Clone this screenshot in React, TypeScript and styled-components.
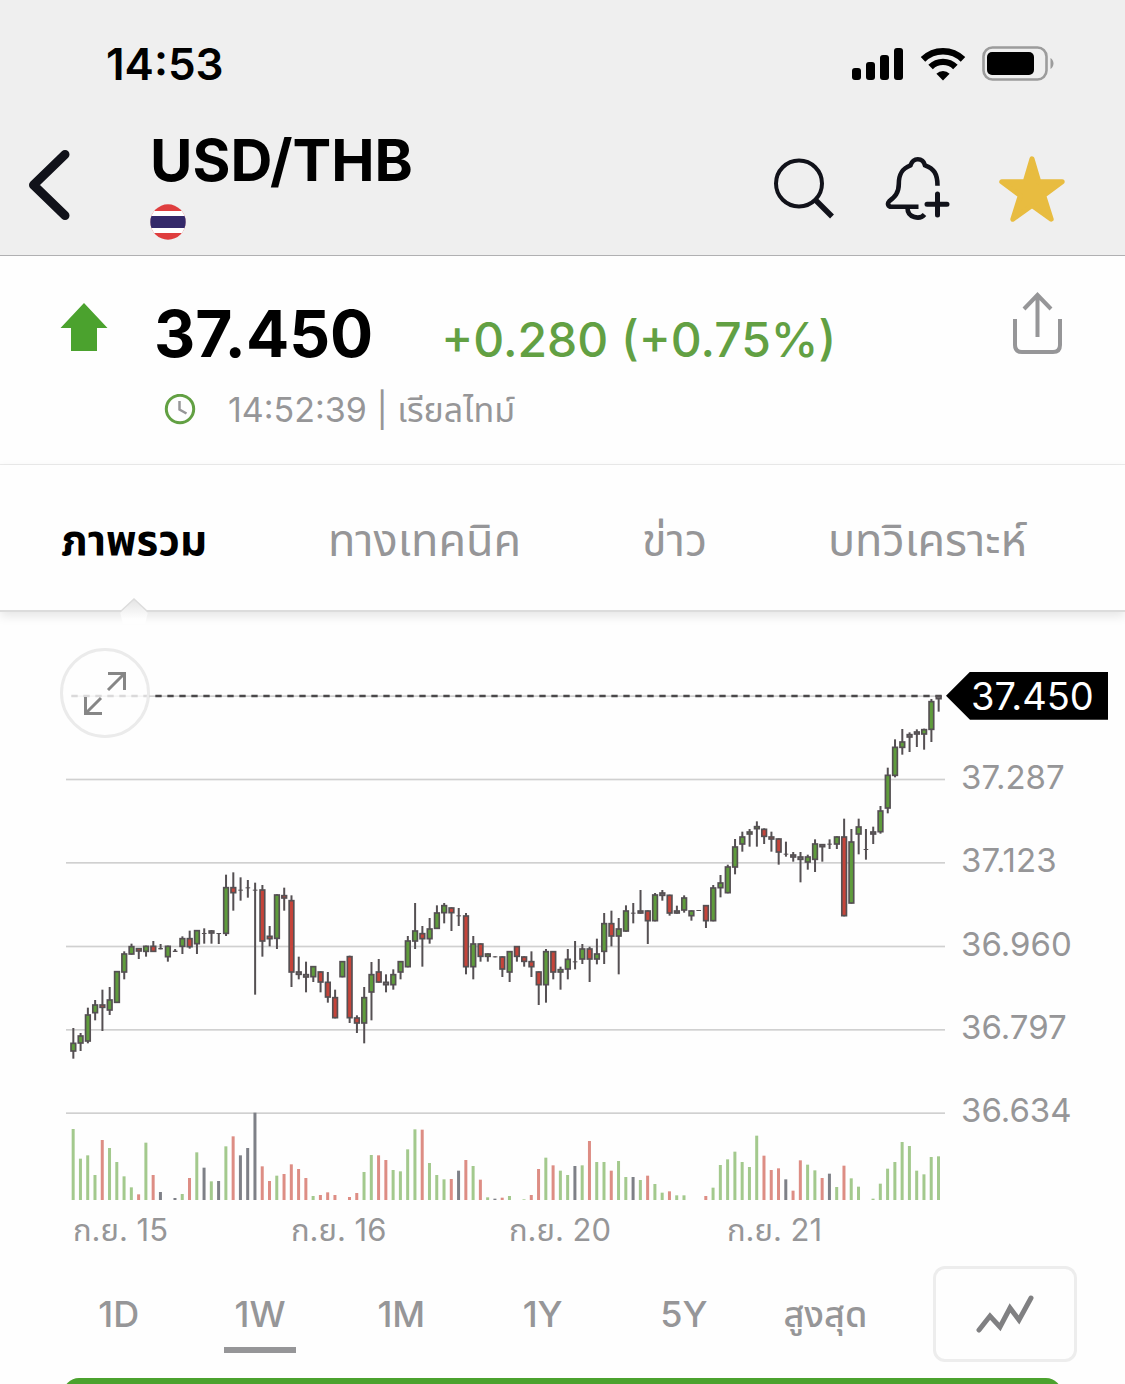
import React, { useState } from "react";
import styled, { createGlobalStyle } from "styled-components";

const GlobalStyle = createGlobalStyle`
  * { box-sizing: border-box; }
  body {
    margin: 0;
    background: #fefefe;
    font-family: Inter, "Noto Sans Thai", "Noto Sans", sans-serif;
    color: #000;
  }
  button {
    margin: 0;
    padding: 0;
    border: 0;
    background: none;
    color: inherit;
    font: inherit;
    cursor: pointer;
  }
  svg { display: block; }
`;

const Screen = styled.div`
  display: flex;
  flex-direction: column;
  height: 100vh;
  overflow: hidden;

  & > * { flex: none; }
`;

const Header = styled.header`
  background: #efefef;
  border-bottom: 1px solid #b0b0b2;
`;

const StatusBar = styled.div`
  display: flex;
  align-items: center;
  justify-content: space-between;
  height: 128px;
  padding: 0 70px 0 106px;
`;

const Clock = styled.time`
  font-size: 44px;
  font-weight: 600;
  line-height: 52px;
`;

const StatusIcons = styled.div`
  display: flex;
  align-items: center;
  gap: 16px;
`;

const NavBar = styled.div`
  display: flex;
  align-items: flex-start;
  height: 127px;
  padding: 0 60px 0 28px;
`;

const BackButton = styled.button`
  width: 44px;
  margin: 20px 78px 0 0;
`;

const TitleBlock = styled.div`
  flex: 1;
  display: flex;
  flex-direction: column;
  gap: 12px;
`;

const Title = styled.h1`
  margin: 0;
  font-size: 58px;
  font-weight: 700;
  line-height: 64px;
`;

const NavActions = styled.div`
  display: flex;
  gap: 48px;
  padding-top: 28px;
`;

const Quote = styled.section`
  display: flex;
  align-items: flex-start;
  height: 209px;
  padding: 36px 60px 0;
  border-bottom: 1px solid #ececec;
`;

const ArrowSlot = styled.div`
  width: 94px;
  padding-top: 10px;
`;

const QuoteBody = styled.div`
  flex: 1;
  display: flex;
  flex-direction: column;
  gap: 8px;
`;

const PriceLine = styled.div`
  display: flex;
  align-items: baseline;
  gap: 68px;
  line-height: 84px;
`;

const Price = styled.strong`
  font-size: 64px;
  font-weight: 700;
`;

const Change = styled.span`
  font-size: 48px;
  font-weight: 500;
  color: #62a043;
`;

const TimeLine = styled.div`
  display: flex;
  align-items: center;
  gap: 32px;
  padding-left: 10px;
  color: #969698;
  font-size: 34px;
  line-height: 40px;
`;

const Tabs = styled.nav`
  position: relative;
  z-index: 1;
  display: flex;
  justify-content: space-between;
  height: 147px;
  padding: 0 98px 0 61px;
  border-bottom: 2px solid #dcdcdc;
  box-shadow: 0 4px 10px rgba(0, 0, 0, 0.1);
  background: #fefefe;
`;

const Tab = styled.button<{ $active: boolean }>`
  position: relative;
  height: 147px;
  padding-top: 6px;
  font-size: ${(p) => (p.$active ? 42 : 45)}px;
  font-weight: ${(p) => (p.$active ? 700 : 400)};
  color: ${(p) => (p.$active ? "#000" : "#969698")};
  white-space: nowrap;
`;

const Caret = styled.svg`
  position: absolute;
  bottom: -12px;
  left: 50%;
  margin-left: -15px;
`;

const ChartSection = styled.section`
  position: relative;
  display: flex;
  height: 500px;
  margin-top: 42px;
  padding-left: 66px;
`;

const Plot = styled.div`
  flex: 1;
  padding-top: 16px;
`;

const PlotSvg = styled.svg`
  width: 100%;
  height: 530px;
`;

const Axis = styled.ol`
  display: flex;
  flex-direction: column;
  width: 180px;
  margin: 0;
  padding: 0;
  list-style: none;
`;

const AxisLabel = styled.li`
  flex: 1;
  display: flex;
  align-items: center;
  padding: 0 0 4px 16px;
  font-size: 33px;
  line-height: 40px;
  color: #969698;
`;

const CurrentLabel = styled.li`
  flex: 1;
  display: flex;
  align-items: center;
  padding-bottom: 4px;
`;

const PriceTag = styled.span`
  width: 162px;
  height: 48px;
  margin: 4px 0 0 1px;
  padding-left: 25px;
  clip-path: polygon(0 50%, 24px 0, 100% 0, 100% 100%, 24px 100%);
  background: #000;
  color: #fff;
  font-size: 38px;
  line-height: 48px;
`;

const ExpandButton = styled.button`
  position: absolute;
  top: -6px;
  left: 60px;
  display: grid;
  place-items: center;
  width: 90px;
  height: 90px;
  border: 3px solid #ebebeb;
  border-radius: 50%;
  background: rgba(254, 254, 254, 0.8);
`;

const Dates = styled.div`
  display: grid;
  grid-template-columns: repeat(4, 1fr);
  margin-top: 56px;
  padding: 0 180px 0 73px;
  font-size: 31px;
  line-height: 40px;
  color: #969698;
`;

const Controls = styled.div`
  display: flex;
  align-items: flex-start;
  margin-top: 16px;
  padding: 0 48px 0 48px;
`;

const Ranges = styled.div`
  flex: 1;
  display: grid;
  grid-template-columns: repeat(6, 1fr);
  margin-right: 37px;
`;

const Range = styled.button<{ $active: boolean }>`
  display: flex;
  flex-direction: column;
  align-items: center;
  height: 87px;
  padding-top: 24px;
  font-size: 36px;
  font-weight: 500;
  line-height: 48px;
  color: #969698;

  &::after {
    content: "";
    width: 72px;
    height: 6px;
    margin-top: 9px;
    background: ${(p) => (p.$active ? "#969698" : "transparent")};
  }
`;

const StyleButton = styled.button`
  display: grid;
  place-items: center;
  width: 144px;
  height: 96px;
  border: 3px solid #ededed;
  border-radius: 12px;
`;

const TradeButton = styled.button`
  height: 96px;
  margin: 16px 63px 0;
  border-radius: 16px;
  background: #4ba22e;
`;

type Kind = "g" | "r" | "n";
/* wick top, body top, body bottom, wick bottom, kind */
type Candle = [number, number, number, number, Kind];

const lower = (by: number, rows: Candle[]): Candle[] =>
  rows.map(([a, b, c, d, k]) => [a + by, b + by, c + by, d + by, k]);

const candles: Candle[] = [
  ...lower(570, [
    [504, 548, 575, 596, "g"], [519, 526, 551, 573, "g"], [443, 463, 545, 550, "g"],
    [420, 433, 460, 481, "g"], [389, 433, 444, 513, "r"], [381, 418, 452, 465, "g"],
    [333, 333, 429, 429, "g"], [274, 280, 338, 358, "g"], [251, 258, 284, 284, "g"],
    [264, 264, 275, 297, "r"], [257, 257, 276, 290, "g"], [243, 257, 276, 276, "r"],
    [252, 264, 268, 268, "n"], [257, 257, 292, 305, "g"], [267, 272, 276, 276, "n"],
    [229, 234, 261, 282, "g"], [212, 234, 262, 266, "r"], [210, 210, 253, 282, "g"],
    [205, 219, 222, 251, "n"], [210, 211, 221, 251, "n"], [219, 219, 222, 252, "n"],
    [44, 81, 222, 228, "g"], [37, 81, 100, 152, "r"], [52, 89, 92, 122, "n"],
    [60, 82, 85, 113, "n"], [68, 89, 92, 404, "n"], [75, 88, 245, 290, "r"],
    [198, 227, 238, 259, "r"], [103, 103, 237, 267, "g"], [83, 105, 116, 152, "r"],
    [106, 120, 338, 381, "r"], [290, 334, 345, 358, "n"], [305, 342, 353, 397, "n"],
    [318, 318, 352, 366, "g"], [334, 334, 368, 397, "r"], [336, 365, 413, 428, "r"],
    [389, 411, 475, 475, "r"], [303, 303, 352, 352, "g"], [287, 288, 475, 489, "r"],
    [466, 472, 491, 519, "r"], [381, 411, 491, 550, "g"], [306, 342, 398, 481, "g"],
    [297, 334, 368, 368, "r"], [343, 365, 376, 397, "n"], [328, 342, 376, 389, "g"],
    [303, 303, 338, 358, "g"], [228, 241, 322, 322, "g"], [129, 211, 245, 267, "g"],
    [198, 219, 238, 320, "r"], [174, 205, 238, 251, "g"], [136, 157, 207, 207, "g"],
    [129, 135, 160, 190, "g"], [142, 142, 160, 213, "r"], [144, 166, 169, 198, "n"],
    [159, 166, 322, 343, "r"], [228, 250, 322, 358, "g"], [250, 250, 291, 305, "r"],
    [280, 280, 291, 305, "g"], [289, 289, 292, 292, "n"], [289, 289, 329, 351, "r"],
    [273, 273, 338, 366, "g"], [258, 258, 291, 305, "r"], [289, 289, 306, 320, "r"],
    [274, 303, 322, 351, "r"], [334, 334, 376, 435, "r"], [267, 273, 376, 428, "g"],
    [273, 273, 338, 358, "r"], [320, 327, 338, 389, "g"], [267, 296, 329, 358, "g"],
    [243, 304, 307, 328, "n"], [252, 265, 299, 312, "g"], [260, 265, 299, 366, "r"],
    [236, 280, 299, 313, "g"], [159, 189, 276, 312, "g"], [152, 189, 230, 259, "r"],
    [174, 205, 230, 343, "g"], [136, 151, 215, 215, "g"], [129, 158, 161, 190, "n"],
    [90, 151, 161, 161, "n"], [151, 151, 184, 252, "r"], [99, 103, 184, 184, "g"],
    [90, 97, 108, 122, "n"], [104, 104, 161, 167, "r"], [137, 151, 161, 161, "n"],
  ]),
  ...lower(390, [
    [286, 292, 332, 338, "g"], [331, 331, 349, 362, "g"], [330, 330, 333, 333, "n"],
    [315, 315, 364, 384, "r"], [255, 262, 364, 364, "g"], [225, 247, 265, 292, "g"],
    [194, 199, 280, 280, "g"], [117, 139, 203, 223, "g"], [95, 109, 134, 155, "g"],
    [87, 94, 104, 140, "g"], [64, 78, 88, 140, "g"], [85, 86, 111, 132, "r"],
    [95, 109, 119, 155, "r"], [115, 115, 158, 194, "r"], [125, 161, 164, 170, "n"],
    [156, 163, 173, 185, "n"], [156, 169, 180, 247, "n"], [164, 169, 188, 209, "g"],
    [118, 130, 180, 216, "g"], [132, 132, 142, 185, "n"], [118, 131, 134, 147, "n"],
    [109, 109, 134, 147, "g"], [56, 109, 349, 349, "r"], [87, 124, 311, 311, "g"],
    [56, 79, 104, 163, "g"], [87, 147, 150, 179, "n"],
  ]),
  [470, 484, 494, 522, "n"], [408, 421, 487, 491, "g"], [293, 314, 416, 430, "g"],
  [208, 230, 318, 322, "g"], [177, 214, 234, 254, "g"], [187, 192, 203, 246, "n"],
  [178, 184, 194, 231, "n"], [176, 177, 194, 239, "g"], [87, 93, 180, 216, "g"],
  [76, 77, 88, 125, "n"],
];

const volumes = (
  "213g 124g 134g 75g 180r 156g 114g 71g 38g 17r 172g 75r 24n 0n 6n 18g 66r 143g 97n 56g " +
  "57n 161g 191r 134n 156n 262n 101r 57r 73g 78r 107r 93r 66r 12g 15r 23r 15r 0n 9r 21r " +
  "84g 135g 134r 120r 90g 86g 152g 212g 211r 111g 75g 62g 63r 88n 120r 102g 61r 8g 4n 7r " +
  "12g 0n 2g 15r 93r 127g 104r 88g 75g 102n 104g 177r 114g 114g 88r 117g 69g 69n 60g 73r " +
  "48g 22g 26r 14g 14g 0n 0n 12r 37g 105g 122g 145g 114g 99g 193g 133r 90r 95r 62n 28r " +
  "119r 106g 89g 66r 79n 39g 103r 65g 40g 0n 4g 49g 94g 114g 174g 162g 88g 77g 129g 131g"
)
  .split(" ")
  .map((v) => ({ size: parseInt(v, 10), kind: v.slice(-1) as Kind }));

const bodyFill: Record<Kind, string> = { g: "#5f9c3c", r: "#c5443a", n: "#777477" };
const volumeFill: Record<Kind, string> = { g: "#a3c98d", r: "#dd8d84", n: "#7e8087" };
const INK = "#555053";
const PLOT_BOTTOM = 1590;
const centre = (i: number) => 22 + i * 21.815;

function CandleChart() {
  return (
    <PlotSvg viewBox="0 0 2637 1590" preserveAspectRatio="none" role="img" aria-label="USD/THB 1W">
      {[78, 328, 578, 829, 1079, 1329].map((y) => (
        <rect key={y} x={y === 78 ? 16 : 0} y={y - 2} width={y === 78 ? 2610 : 2637} height={5} fill="#d0d0d0" />
      ))}
      <line x1="16" x2="2630" y1="78" y2="78" stroke="#4a484a" strokeWidth="7" strokeDasharray="19 17" />
      {volumes.map((v, i) => (
        <rect key={i} x={centre(i) - 5} y={PLOT_BOTTOM - v.size} width={9} height={v.size} fill={volumeFill[v.kind]} />
      ))}
      {candles.map(([high, top, bottom, low, kind], i) => {
        const x = centre(i);
        const flat = bottom - top < 6;
        return (
          <g key={i}>
            <rect x={x - 3} y={high} width={6} height={low - high} fill={INK} />
            {flat ? (
              <rect x={x - 7} y={top} width={14} height={bottom - top} fill={INK} />
            ) : (
              <rect
                x={x - 7}
                y={top + 2}
                width={14}
                height={bottom - top - 4}
                fill={bodyFill[kind]}
                stroke={INK}
                strokeWidth={5}
              />
            )}
          </g>
        );
      })}
    </PlotSvg>
  );
}

const Signal = () => (
  <svg width="52" height="34" viewBox="0 0 52 34" aria-hidden="true">
    <rect x="0" y="21" width="9" height="12" rx="3" />
    <rect x="14" y="15" width="9" height="18" rx="3" />
    <rect x="28" y="8" width="9" height="25" rx="3" />
    <rect x="42" y="1" width="9" height="32" rx="3" />
  </svg>
);

const Wifi = () => (
  <svg width="46" height="34" viewBox="0 0 46 34" aria-hidden="true">
    <g fill="none" stroke="#000" strokeWidth="6.4">
      <path d="M3 12.4A28.5 28.5 0 0 1 43 12.4" />
      <path d="M10.6 20A17.6 17.6 0 0 1 35.4 20" />
    </g>
    <path d="M23 33.5L16.4 26.8A9.4 9.4 0 0 1 29.6 26.8Z" />
  </svg>
);

const Battery = () => (
  <svg width="73" height="36" viewBox="0 0 73 36" aria-hidden="true">
    <rect x="1.5" y="1.5" width="63" height="32" rx="9" fill="none" stroke="#9c9c9c" strokeWidth="2.6" />
    <rect x="5" y="6" width="47" height="23" rx="5" />
    <path d="M68.5 12C72.5 14.5 72.5 20.5 68.5 23Z" fill="#9c9c9c" />
  </svg>
);

const Flag = () => (
  <svg width="36" height="36" viewBox="0 0 36 36" role="img" aria-label="THB">
    <clipPath id="flag-disc"><circle cx="18" cy="18" r="17.7" /></clipPath>
    <g clipPath="url(#flag-disc)">
      <rect width="36" height="36" fill="#df3e3f" />
      <rect y="7" width="36" height="22" fill="#fff" />
      <rect y="12" width="36" height="12" fill="#34296a" />
    </g>
  </svg>
);

const tabNames = ["ภาพรวม", "ทางเทคนิค", "ข่าว", "บทวิเคราะห์"];
const rangeNames = ["1D", "1W", "1M", "1Y", "5Y", "สูงสุด"];

export default function App() {
  const [tab, setTab] = useState(0);
  const [range, setRange] = useState(1);

  return (
    <Screen>
      <GlobalStyle />
      <Header>
        <StatusBar>
          <Clock>14:53</Clock>
          <StatusIcons>
            <Signal />
            <Wifi />
            <Battery />
          </StatusIcons>
        </StatusBar>
        <NavBar>
          <BackButton aria-label="Back">
            <svg width="44" height="74" viewBox="0 0 44 74" fill="none" stroke="#11121a" strokeWidth="9" strokeLinecap="round" strokeLinejoin="round">
              <path d="M37 6.500L5.500 37L37 67.500" />
            </svg>
          </BackButton>
          <TitleBlock>
            <Title>USD/THB</Title>
            <Flag />
          </TitleBlock>
          <NavActions>
            <button aria-label="Search">
              <svg width="66" height="66" viewBox="0 0 66 66" fill="none" stroke="#11121a">
                <circle cx="28" cy="27.500" r="23" strokeWidth="4" />
                <path d="M44 43.500L61 60.500" strokeWidth="5.500" />
              </svg>
            </button>
            <button aria-label="Add alert">
              <svg width="66" height="66" viewBox="0 0 66 66" fill="none" stroke="#11121a" strokeWidth="4.600">
                <path d="M33.500 50.800H6.500C3 50.800 2 47.500 4.200 45.300C10 40.500 13.800 37 13.800 28C13.800 18 17 12.500 25.500 9.300C27 5 29.500 3.300 32.800 3.300C36 3.300 38.800 5 40 9.300C49 12.500 52.500 18 52.500 29.700" />
                <path d="M22.500 52C22.500 62 35 64 39.500 58.500" />
                <path d="M52.500 38V59M42 48.300H62" strokeLinecap="round" strokeWidth="5" />
              </svg>
            </button>
            <button aria-label="Favourite">
              <svg width="66" height="66" viewBox="0 0 66 66" fill="#e8bc40" stroke="#e8bc40" strokeWidth="5" strokeLinejoin="round">
                <path d="M33 2.800L39.800 25.800H63.200L44.700 39.600L52.200 63.200L33 49.500L13.800 63.200L21.300 39.600L2.800 25.800H26.200Z" />
              </svg>
            </button>
          </NavActions>
        </NavBar>
      </Header>

      <Quote>
        <ArrowSlot>
          <svg width="48" height="50" viewBox="0 0 48 50" fill="#4ba22e" aria-hidden="true">
            <path d="M24 1L47.500 26H37V49H11V26H.5Z" />
          </svg>
        </ArrowSlot>
        <QuoteBody>
          <PriceLine>
            <Price>37.450</Price>
            <Change>+0.280 (+0.75%)</Change>
          </PriceLine>
          <TimeLine>
            <svg width="32" height="32" viewBox="0 0 32 32" fill="none" aria-hidden="true">
              <circle cx="16" cy="15" r="13.700" stroke="#62a043" strokeWidth="3" />
              <path d="M15.500 7V15.500L22.500 19.500" stroke="#969698" strokeWidth="2.500" />
            </svg>
            <span>14:52:39 | เรียลไทม์</span>
          </TimeLine>
        </QuoteBody>
        <button aria-label="Share">
          <svg width="54" height="64" viewBox="0 0 54 64" fill="none" stroke="#969698" strokeWidth="4">
            <path d="M4 27V53Q4 60 11 60H42Q49 60 49 53V27" />
            <path d="M26.500 45V4M13 17L26.500 3L40 17" />
          </svg>
        </button>
      </Quote>

      <Tabs>
        {tabNames.map((name, i) => (
          <Tab key={name} $active={i === tab} onClick={() => setTab(i)}>
            {name}
            {i === tab && (
              <Caret width="30" height="26" viewBox="0 0 30 26" aria-hidden="true">
                <linearGradient id="caret-fade" x1="0" y1="0" x2="0" y2="1">
                  <stop offset="0" stopColor="#e4e4e4" />
                  <stop offset="0.800" stopColor="#fefefe" />
                </linearGradient>
                <path d="M1 14L15 1L29 14L26 26H4Z" fill="url(#caret-fade)" />
                <path d="M1 14L15 1L29 14" fill="none" stroke="#dcdcdc" strokeWidth="1.500" />
              </Caret>
            )}
          </Tab>
        ))}
      </Tabs>

      <ChartSection>
        <Plot>
          <CandleChart />
        </Plot>
        <Axis>
          <CurrentLabel>
            <PriceTag>37.450</PriceTag>
          </CurrentLabel>
          {["37.287", "37.123", "36.960", "36.797", "36.634"].map((p) => (
            <AxisLabel key={p}>{p}</AxisLabel>
          ))}
        </Axis>
        <ExpandButton aria-label="Expand chart">
          <svg width="48" height="48" viewBox="0 0 48 48" fill="none" stroke="#868686" strokeWidth="3">
            <path d="M27 4.500H43.500V21M43.500 4.500L27 21" />
            <path d="M4.500 28V44.500H21M4.500 44.500L20 29" />
          </svg>
        </ExpandButton>
      </ChartSection>

      <Dates>
        {["ก.ย. 15", "ก.ย. 16", "ก.ย. 20", "ก.ย. 21"].map((d) => (
          <span key={d}>{d}</span>
        ))}
      </Dates>

      <Controls>
        <Ranges>
          {rangeNames.map((name, i) => (
            <Range key={name} $active={i === range} onClick={() => setRange(i)}>
              {name}
            </Range>
          ))}
        </Ranges>
        <StyleButton aria-label="Chart style">
          <svg width="60" height="40" viewBox="0 0 60 40" fill="none" stroke="#808082" strokeWidth="5" strokeLinejoin="miter" strokeLinecap="round">
            <path d="M4 36L15 22L25 33L35 14L44 26L56 4" />
          </svg>
        </StyleButton>
      </Controls>

      <TradeButton aria-label="Trade" />
    </Screen>
  );
}
